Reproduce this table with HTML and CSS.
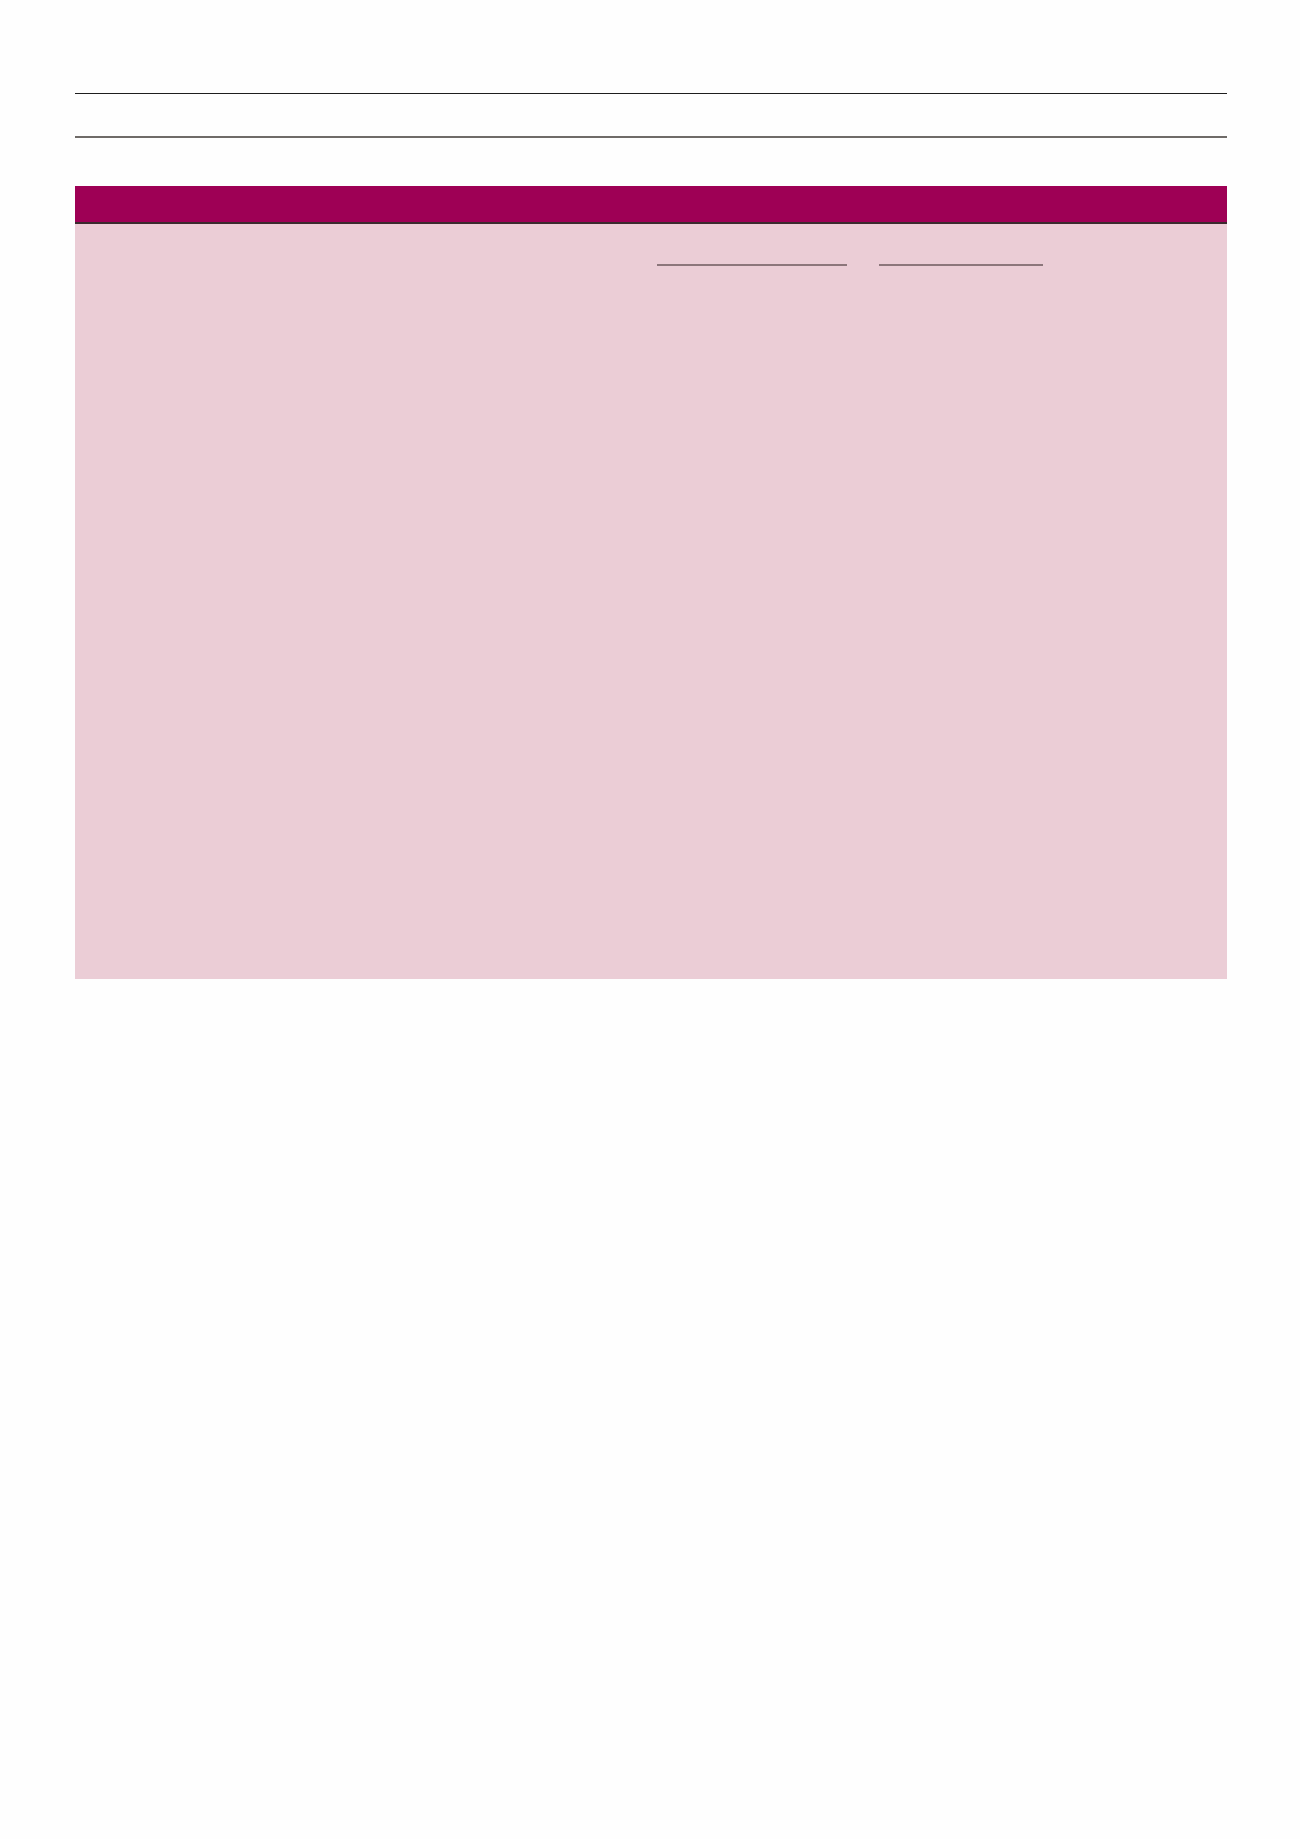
FILE: index.html
```html
<!DOCTYPE html>
<html lang="en">
<head>
<meta charset="utf-8">
<title>Table</title>
<link rel="stylesheet" href="styles.css">
</head>
<body>
<div class="page">
  <div class="rule-top"></div>
  <div class="rule-bottom"></div>
  <div class="table">
    <div class="table-head"></div>
    <div class="table-body">
      <div class="spanners">
        <span class="spanner spanner-a"></span>
        <span class="spanner spanner-b"></span>
      </div>
    </div>
  </div>
</div>
</body>
</html>
```
FILE: styles.css
```css
html, body {
  margin: 0;
  padding: 0;
  background: #fefefe;
  font-family: "Liberation Sans", Arial, sans-serif;
}
.page {
  width: 1152px;
  margin-left: 75px;
  padding-top: 93px;
  height: 1746px;
}
.rule-top {
  height: 1px;
  background: #1e1e1e;
}
.rule-bottom {
  margin-top: 42px;
  height: 2px;
  background: #6f6b68;
}
.table {
  margin-top: 48px;
}
.table-head {
  height: 36px;
  background: #9e0055;
  border-bottom: 2px solid #3b2a2e;
}
.table-body {
  height: 755px;
  background: #ebcdd6;
  padding-top: 40px;
  box-sizing: border-box;
}
.spanners {
  display: flex;
  gap: 32px;
  padding-left: 582px;
}
.spanner {
  display: block;
  height: 2px;
  background: #8c767b;
}
.spanner-a { width: 190px; }
.spanner-b { width: 164px; }
```
